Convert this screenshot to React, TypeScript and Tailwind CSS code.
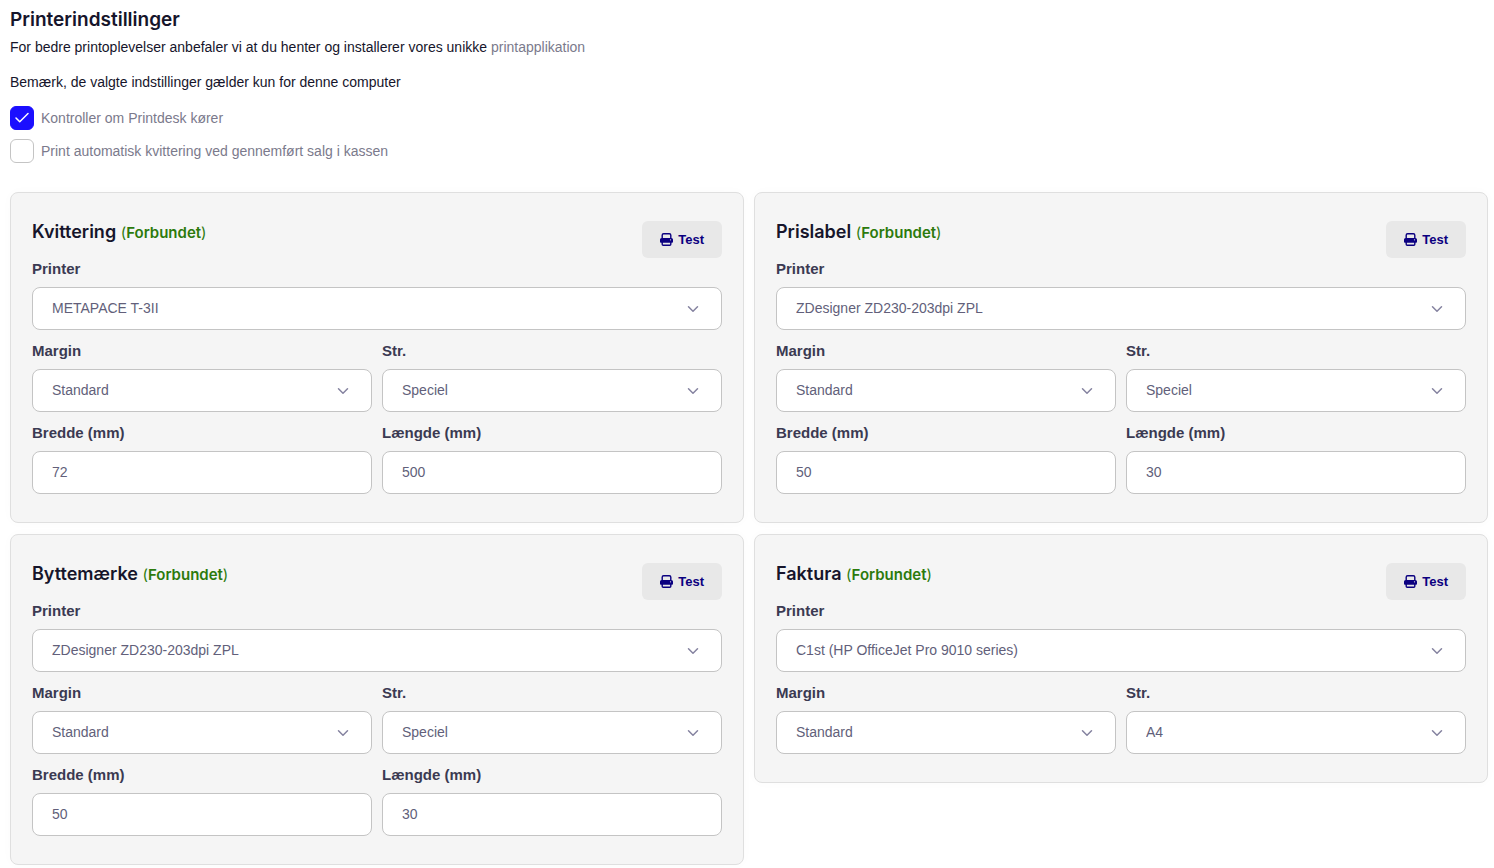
import { useState } from "react";
import { Check, ChevronDown } from "lucide-react";

type Printer = {
  id: string;
  title: string;
  printer: string;
  margin: string;
  size: string;
  width?: string;
  length?: string;
};

const printers: Printer[] = [
  { id: "receipt", title: "Kvittering", printer: "METAPACE T-3II", margin: "Standard", size: "Speciel", width: "72", length: "500" },
  { id: "price", title: "Prislabel", printer: "ZDesigner ZD230-203dpi ZPL", margin: "Standard", size: "Speciel", width: "50", length: "30" },
  { id: "swap", title: "Byttemærke", printer: "ZDesigner ZD230-203dpi ZPL", margin: "Standard", size: "Speciel", width: "50", length: "30" },
  { id: "invoice", title: "Faktura", printer: "C1st (HP OfficeJet Pro 9010 series)", margin: "Standard", size: "A4" },
];

const printerOptions = ["METAPACE T-3II", "ZDesigner ZD230-203dpi ZPL", "C1st (HP OfficeJet Pro 9010 series)"];
const marginOptions = ["Standard", "Ingen"];
const sizeOptions = ["Speciel", "A4"];

const labelClass = "block mb-2 text-[15px] leading-[21px] font-bold text-[#3b3a52]";
const fieldClass =
  "block w-full h-[43px] appearance-none rounded-lg border border-[#c4c4c4] bg-white pb-[2px] pl-[19px] text-sm text-[#625f7a] outline-none focus:border-[#1b0fff]";

function PrinterIcon() {
  return (
    <svg width="13" height="13" viewBox="0 0 13 13" fill="none" aria-hidden="true">
      <path d="M2.200 5V2.200C2.200 1.300 2.700.8 3.600.8h5.800c.9 0 1.400.5 1.400 1.400V5" stroke="currentColor" strokeWidth="1.400" />
      <path d="M1.600 5h9.800A1.600 1.600 0 0 1 13 6.600v2.200a.9.9 0 0 1-.9.9H.9a.9.9 0 0 1-.9-.9V6.600A1.600 1.600 0 0 1 1.600 5z" fill="currentColor" />
      <path d="M2.200 9v2.200c0 .6.400 1 1 1h6.600c.6 0 1-.4 1-1V9z" fill="#e8e8e8" stroke="currentColor" strokeWidth="1.400" />
      <circle cx="10.500" cy="6.800" r=".6" fill="#e8e8e8" />
    </svg>
  );
}

function SelectField({ id, label, value, options }: { id: string; label: string; value: string; options: string[] }) {
  const [selected, setSelected] = useState(value);

  return (
    <div>
      <label htmlFor={id} className={labelClass}>{label}</label>
      <div className="relative">
        <select id={id} value={selected} onChange={(e) => setSelected(e.target.value)} className={`${fieldClass} pr-12`}>
          {options.map((o) => (
            <option key={o}>{o}</option>
          ))}
        </select>
        <ChevronDown size={18} className="absolute right-5 top-[13px] pointer-events-none text-[#8583a0]" />
      </div>
    </div>
  );
}

function NumberField({ id, label, value }: { id: string; label: string; value: string }) {
  return (
    <div>
      <label htmlFor={id} className={labelClass}>{label}</label>
      <input id={id} type="text" inputMode="numeric" defaultValue={value} className={fieldClass} />
    </div>
  );
}

function PrinterCard({ data }: { data: Printer }) {
  return (
    <section className="rounded-lg border border-[#dfdfdf] bg-[#f5f5f5] px-[21px] py-7 shadow-[0_0_12px_rgba(0,0,0,0.02)]">
      <div className="flex items-start justify-between">
        <h2 className="font-[Inter,'Liberation_Sans',sans-serif] text-lg leading-[21px] font-semibold text-[#16152b]">
          {data.title}{" "}
          <span className="text-[15px] font-normal text-[#2c7a0c]">
            (<b className="font-semibold">Forbundet</b>)
          </span>
        </h2>
        <button type="button" className="flex h-[37px] items-center gap-[5px] rounded-md bg-[#e8e8e8] px-[18px] text-[13px] leading-[19px] font-bold text-[#0b0080] hover:bg-[#dedede]">
          <PrinterIcon />
          Test
        </button>
      </div>

      <SelectField id={`${data.id}-printer`} label="Printer" value={data.printer} options={printerOptions} />

      <div className="mt-[10px] grid grid-cols-2 gap-[10px]">
        <SelectField id={`${data.id}-margin`} label="Margin" value={data.margin} options={marginOptions} />
        <SelectField id={`${data.id}-size`} label="Str." value={data.size} options={sizeOptions} />
        {data.width && <NumberField id={`${data.id}-width`} label="Bredde (mm)" value={data.width} />}
        {data.length && <NumberField id={`${data.id}-length`} label="Længde (mm)" value={data.length} />}
      </div>
    </section>
  );
}

function CheckField({ label, checked, onChange }: { label: string; checked: boolean; onChange: (v: boolean) => void }) {
  return (
    <label className="flex w-fit items-center gap-[7px] text-sm text-[#7b7a8c]">
      <span className="relative">
        <input
          type="checkbox"
          checked={checked}
          onChange={(e) => onChange(e.target.checked)}
          className="block size-6 appearance-none rounded-md border border-[#c4c4c4] bg-white checked:border-[#1b0fff] checked:bg-[#1b0fff]"
        />
        {checked && <Check size={18} className="absolute left-[3px] top-[3px] pointer-events-none text-white" />}
      </span>
      {label}
    </label>
  );
}

export default function App() {
  const [checkPrintdesk, setCheckPrintdesk] = useState(true);
  const [autoPrint, setAutoPrint] = useState(false);

  return (
    <main className="min-h-screen bg-white pt-2 pr-[6px] pl-[10px] font-['Liberation_Sans',Arial,sans-serif] text-sm text-[#16152b]">
      <h1 className="font-[Inter,'Liberation_Sans',sans-serif] text-[19px] leading-6 font-semibold">Printerindstillinger</h1>
      <p className="mt-[5px]">
        For bedre printoplevelser anbefaler vi at du henter og installerer vores unikke{" "}
        <a href="#" className="text-[#7b7a8c]">printapplikation</a>
      </p>
      <p className="mt-[15px]">Bemærk, de valgte indstillinger gælder kun for denne computer</p>

      <div className="mt-[14px] flex flex-col gap-[9px]">
        <CheckField label="Kontroller om Printdesk kører" checked={checkPrintdesk} onChange={setCheckPrintdesk} />
        <CheckField label="Print automatisk kvittering ved gennemført salg i kassen" checked={autoPrint} onChange={setAutoPrint} />
      </div>

      <div className="mt-[29px] grid grid-cols-2 items-start gap-x-[10px] gap-y-[11px]">
        {printers.map((p) => (
          <PrinterCard key={p.id} data={p} />
        ))}
      </div>
    </main>
  );
}
